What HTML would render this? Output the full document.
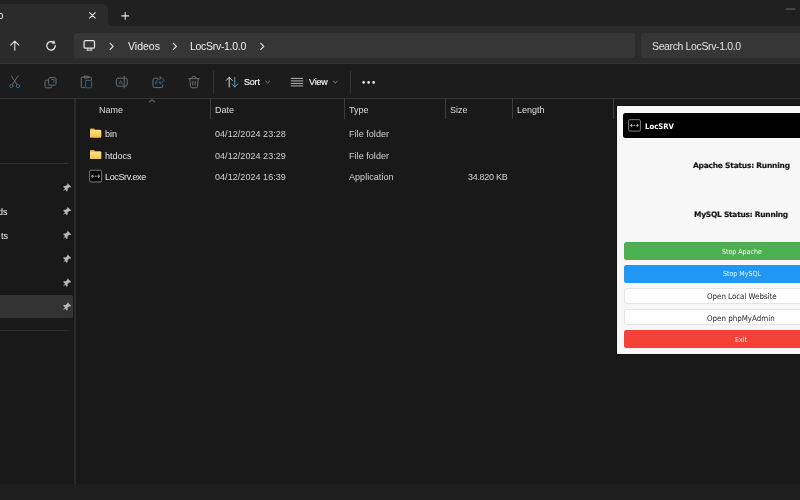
<!DOCTYPE html>
<html><head><meta charset="utf-8">
<style>
*{box-sizing:border-box;margin:0;padding:0}
html,body{width:800px;height:500px;overflow:hidden;background:#191919}
body{position:relative;font-family:"Liberation Sans",sans-serif;color:#e6e6e6;font-size:9px}
.abs{position:absolute}
svg{position:absolute;overflow:visible}
#title{left:0;top:0;width:800px;height:27px;background:#202020}
#tab{left:-10px;top:4px;width:118px;height:24px;background:#2b2b2b;border-radius:5px 5px 0 0}
#nav{left:0;top:26px;width:800px;height:38px;background:#2b2b2b}
#addr{left:74px;top:33px;width:561px;height:24.500px;background:#363636;border-radius:3px}
#search{left:641px;top:33px;width:170px;height:24.500px;background:#363636;border-radius:3px}
#navline{left:0;top:63px;width:800px;height:1px;background:#343434}
#tool{left:0;top:64px;width:800px;height:34px;background:#1c1c1c}
#toolline{left:0;top:98px;width:800px;height:1px;background:#343434}
#sideline{left:74px;top:99px;width:2px;height:385px;background:#2a2a2a}
#status{left:0;top:484px;width:800px;height:16px;background:#1f1f1f}
.t{position:absolute;white-space:nowrap;line-height:12px;will-change:transform}
.a{font-size:10.5px;color:#f0f0f0}
.h{color:#dcdcdc}
.d{color:#d2d2d2;letter-spacing:0.050px}
.colsep{position:absolute;top:99px;width:1px;height:20px;background:#3c3c3c}
.app{font-family:"DejaVu Sans Condensed","DejaVu Sans",sans-serif}
.btn{position:absolute;left:624px;width:190px;border-radius:2.5px}
</style></head><body>
<div id="title" class="abs"></div>
<div id="tab" class="abs"></div>
<div id="nav" class="abs"></div>
<div id="addr" class="abs"></div>
<div id="search" class="abs"></div>
<div id="navline" class="abs"></div>
<div id="tool" class="abs"></div>
<div id="toolline" class="abs"></div>
<div id="sideline" class="abs"></div>
<div id="status" class="abs"></div>

<!-- title bar icons -->
<svg style="left:0;top:0" width="800" height="64" viewBox="0 0 800 64" fill="none" stroke="#e4e4e4" stroke-width="1.1" stroke-linecap="round" stroke-linejoin="round">
  <path d="M89.600 12.600l5.600 5.600M95.200 12.600l-5.600 5.600"/>
  <path d="M107.800 21.600Q107.800 26 112.200 26H107.800z" fill="#2b2b2b" stroke="none"/>
  <path d="M125.200 12.500v6.800M121.800 15.900h6.800"/>
  <path d="M786.5 9h8.5" stroke="#6a6a6a"/>
  <!-- up arrow -->
  <path d="M14.800 50.300V41.200M10.700 45.200l4.100-4.100 4.100 4.100"/>
  <!-- refresh -->
  <path d="M55.260 45.200A4.300 4.300 0 1 1 53.150 42.080" stroke-width="1.300" stroke-linecap="butt"/>
  <path d="M55.050 43.180L53.950 40.690 52.350 43.470z" fill="#f4f4f4" stroke="#f4f4f4" stroke-width="0.400"/>
  <!-- monitor -->
  <rect x="84.100" y="40.600" width="10.400" height="7.600" rx="1.300" stroke-width="1.250"/>
  <path d="M86.8 50.2h5.2M87.8 48.4v1.6M91 48.4v1.6" stroke-width="0.9"/>
  <!-- chevrons -->
  <path d="M110.2 43.4l3 3-3 3M173.4 43.4l3 3-3 3M260.8 43.4l3 3-3 3" stroke-width="1.2"/>
</svg>

<div class="t" style="left:-80px;width:83.300px;text-align:right;top:10px;color:#fff">LocSrv-1.0.0</div>
<!-- address texts -->
<div class="t a" style="left:128px;top:40px">Videos</div>
<div class="t a" style="left:190px;top:40px;letter-spacing:-0.3px">LocSrv-1.0.0</div>
<div class="t a" style="left:652px;top:40px;letter-spacing:-0.37px;color:#e2e2e2">Search LocSrv-1.0.0</div>

<!-- toolbar icons -->
<svg style="left:0;top:64px" width="400" height="34" viewBox="0 64 400 34" fill="none" stroke="#6c6c6c" stroke-width="1" stroke-linecap="round" stroke-linejoin="round">
  <!-- cut -->
  <path d="M11.4 76l5.6 8.6M18 76l-5.6 8.6"/>
  <circle cx="11.4" cy="86" r="1.7" stroke="#35627f"/><circle cx="18" cy="86" r="1.7" stroke="#35627f"/>
  <!-- copy -->
  <rect x="48.6" y="77.6" width="7.4" height="7.6" rx="1.6" stroke="#6c6c6c"/>
  <path d="M51.5 79.5h2.5v3.2" stroke="#35627f"/>
  <path d="M47.6 80.2h-1.2a1.4 1.4 0 0 0-1.4 1.4v4.8a1.4 1.4 0 0 0 1.4 1.4h4a1.4 1.4 0 0 0 1.4-1.4v-0.6"/>
  <!-- paste -->
  <path d="M84.4 87.6h-2.2a1 1 0 0 1-1-1v-8.4a1 1 0 0 1 1-1h8.2a1 1 0 0 1 1 1v1.4"/>
  <rect x="83.8" y="76.2" width="5" height="1.8" rx="0.6"/>
  <rect x="85.6" y="80.4" width="6" height="7.4" rx="0.8" stroke="#35627f"/>
  <!-- rename -->
  <rect x="116.4" y="78.2" width="10.8" height="8" rx="1.6"/>
  <path d="M124.2 76.4v11.6" />
  <path d="M119 84.2l1.6-4 1.6 4M119.6 83h2" stroke="#35627f" stroke-width="0.8"/>
  <!-- share -->
  <path d="M158 78.2h-3.2a1.8 1.8 0 0 0-1.8 1.800v5.800a1.8 1.8 0 0 0 1.8 1.8h6.200a1.8 1.8 0 0 0 1.8-1.8v-1"/>
  <path d="M160.200 76.8l4.200 3.600-4.200 3.600v-2.200c-2.400 0-3.800.8-4.800 2.400 0-3 1.600-5 4.800-5.200z" stroke="#35627f"/>
  <!-- delete -->
  <path d="M188.600 78.600h10.800M191.800 78.400a2.200 2.200 0 0 1 4.400 0"/>
  <path d="M189.800 78.800l.8 7.800a1.400 1.400 0 0 0 1.400 1.200h4a1.400 1.400 0 0 0 1.400-1.200l.8-7.800"/>
  <path d="M192.800 81.400v3.800M195.200 81.400v3.800"/>
  <!-- separators -->
  <path d="M213.500 71v22M350.500 71v22" stroke="#333"/>
  <!-- sort -->
  <path d="M229.200 87V77.400M226.200 80.400l3-3 3 3" stroke="#d8d8d8"/>
  <path d="M234.800 77.400V87M231.800 84l3 3 3-3" stroke="#4aa3e0"/>
  <path d="M265.800 81.200l1.900 1.800 1.900-1.800M333.400 81.200l1.900 1.800 1.900-1.800" stroke="#8e8e8e" stroke-width="0.9"/>
  <!-- view -->
  <path d="M291.200 78.400h11.600M291.200 80.900h11.600M291.200 83.400h11.600M291.200 85.900h11.600" stroke="#c8c8c8" stroke-width="0.9"/>
  <!-- dots -->
  <g fill="#f0f0f0" stroke="none"><circle cx="363.600" cy="82.400" r="1.300"/><circle cx="368.600" cy="82.400" r="1.300"/><circle cx="373.600" cy="82.400" r="1.300"/></g>
</svg>
<div class="t" style="left:244px;top:76px;letter-spacing:-0.2px;color:#f6f6f6;-webkit-text-stroke:0.150px #f6f6f6">Sort</div>
<div class="t" style="left:309px;top:76px;letter-spacing:-0.2px;color:#f6f6f6;-webkit-text-stroke:0.150px #f6f6f6">View</div>

<!-- column headers -->
<svg style="left:148px;top:99px" width="8" height="4" viewBox="0 0 8 4" fill="none" stroke="#9a9a9a" stroke-width="0.9"><path d="M1 3.300l3-2.600 3 2.600"/></svg>
<div class="t h" style="left:99px;top:104px">Name</div>
<div class="t h" style="left:215px;top:104px">Date</div>
<div class="t h" style="left:349px;top:104px">Type</div>
<div class="t h" style="left:450px;top:104px">Size</div>
<div class="t h" style="left:517px;top:104px">Length</div>
<div class="colsep" style="left:210px"></div>
<div class="colsep" style="left:344px"></div>
<div class="colsep" style="left:445px"></div>
<div class="colsep" style="left:512px"></div>
<div class="colsep" style="left:613px"></div>

<!-- file icons -->
<svg style="left:89px;top:127px" width="14" height="58" viewBox="89 127 14 58">
  <defs><linearGradient id="fg" x1="0" y1="0" x2="0" y2="1"><stop offset="0" stop-color="#ffe08a"/><stop offset="1" stop-color="#f4c343"/></linearGradient></defs>
  <path d="M90 129.300a0.900 0.900 0 0 1 .9-.9h3l1.300 1.300h5.100a0.900 0.900 0 0 1 .9.900v6a0.900 0.900 0 0 1-.9.900h-9.400a0.900 0.900 0 0 1-.9-.9z" fill="#e8b13a"/>
  <rect x="90" y="130.100" width="11.200" height="7.400" rx="0.900" fill="url(#fg)"/>
  <path d="M90 150.900a0.900 0.900 0 0 1 .9-.9h3l1.300 1.300h5.100a0.900 0.900 0 0 1 .9.900v6a0.900 0.900 0 0 1-.9.900h-9.400a0.900 0.900 0 0 1-.9-.9z" fill="#e8b13a"/>
  <rect x="90" y="151.700" width="11.200" height="7.400" rx="0.900" fill="url(#fg)"/>
  <rect x="89.600" y="170.200" width="12" height="11.800" rx="1.400" fill="#050505" stroke="#8a8a8a" stroke-width="0.9"/>
  <path d="M92.200 176.200h7" fill="none" stroke="#e8e8e8" stroke-width="0.800" stroke-dasharray="1.800 0.800"/><path d="M93.200 174.600l-1.700 1.600 1.700 1.600M98 174.600l1.700 1.600-1.700 1.600" fill="none" stroke="#e8e8e8" stroke-width="0.800"/>
</svg>

<!-- rows -->
<div class="t" style="left:105px;top:128px">bin</div>
<div class="t" style="left:105px;top:150px">htdocs</div>
<div class="t" style="left:105px;top:171px;letter-spacing:-0.35px">LocSrv.exe</div>
<div class="t d" style="left:215px;top:128px">04/12/2024 23:28</div>
<div class="t d" style="left:215px;top:150px">04/12/2024 23:29</div>
<div class="t d" style="left:215px;top:171px">04/12/2024 16:39</div>
<div class="t d" style="left:349px;top:128px">File folder</div>
<div class="t d" style="left:349px;top:150px">File folder</div>
<div class="t d" style="left:349px;top:171px">Application</div>
<div class="t d" style="left:468px;top:171px;letter-spacing:-0.3px">34.820 KB</div>

<!-- sidebar -->
<div class="abs" style="left:0;top:295px;width:73px;height:23px;background:#333;border-radius:0 2px 2px 0"></div>
<div class="abs" style="left:0;top:163px;width:68px;height:1px;background:#333"></div>
<div class="abs" style="left:0;top:330px;width:68px;height:1px;background:#2e2e2e"></div>
<div class="t" style="left:-2px;top:205.500px;color:#f4f4f4">ds</div>
<div class="t" style="left:0.500px;top:229.500px;color:#f4f4f4">ts</div>
<svg style="left:62px;top:182px" width="10" height="130" viewBox="0 0 10 130">
  <defs><g id="pin"><path d="M5.600 0.600l3.400 3.400-1 .5-1.300-.1-1.700 1.700.1 2-.8.800-2-2L.600 8.700.8 7.400l1.500-1.600-2-2 .8-.8 2 .1 1.700-1.700L4.700 0z" fill="#b4b8bc"/></g></defs>
  <use href="#pin" transform="translate(0.900 1.200) scale(0.930)"/><use href="#pin" transform="translate(0.900 24.900) scale(0.930)"/><use href="#pin" transform="translate(0.900 48.700) scale(0.930)"/><use href="#pin" transform="translate(0.900 72.500) scale(0.930)"/><use href="#pin" transform="translate(0.900 96.400) scale(0.930)"/><use href="#pin" transform="translate(0.900 120.200) scale(0.930)"/>
</svg>

<!-- app window -->
<div class="abs" style="left:616px;top:105px;width:190px;height:250px;background:#111"></div>
<div class="abs" style="left:617px;top:106px;width:190px;height:248px;background:#f7f7f7"></div>
<div class="abs" style="left:623px;top:113px;width:190px;height:24.500px;background:#000;border-radius:2.500px"></div>
<svg style="left:628px;top:119px" width="13" height="13" viewBox="0 0 13 13" fill="none" stroke="#a0a0a0" stroke-width="0.8">
  <rect x="0.600" y="0.700" width="11.800" height="11.400" rx="1.200"/>
  <path d="M3 6.400h7" stroke="#fff" stroke-width="0.700" stroke-dasharray="1.800 0.800"/><path d="M4.200 4.900L2.600 6.400l1.600 1.500M8.800 4.900l1.600 1.500-1.600 1.500" stroke="#fff" stroke-width="0.700"/>
</svg>
<div class="t app" style="left:644.500px;top:121px;font-weight:bold;font-size:7.700px;color:#fff">LocSRV</div>
<div class="t app" style="left:692.600px;top:159.500px;font-family:'DejaVu Sans',sans-serif;font-weight:bold;font-size:7.500px;letter-spacing:-0.230px;color:#161616;-webkit-text-stroke:0.200px #161616">Apache Status: Running</div>
<div class="t app" style="left:694.400px;top:209px;font-family:'DejaVu Sans',sans-serif;font-weight:bold;font-size:7.500px;letter-spacing:-0.270px;color:#161616;-webkit-text-stroke:0.200px #161616">MySQL Status: Running</div>
<div class="btn" style="top:242px;height:18px;background:#4caf50"></div>
<div class="btn" style="top:264.800px;height:18px;background:#2196f3"></div>
<div class="btn" style="top:287.800px;height:16.200px;background:#fff;border:1px solid #e4e4e4"></div>
<div class="btn" style="top:309.300px;height:15.600px;background:#fff;border:1px solid #e4e4e4"></div>
<div class="btn" style="top:330.300px;height:17.500px;background:#f44336"></div>
<div class="t app" style="left:721.500px;top:245.600px;font-size:7px;color:#f4fff4">Stop Apache</div>
<div class="t app" style="left:722.500px;top:268.400px;font-size:7px;color:#f0f8ff">Stop MySQL</div>
<div class="t app" style="left:706.500px;top:290.900px;font-size:7.850px;color:#2a2a2a">Open Local Website</div>
<div class="t app" style="left:707px;top:313px;font-size:7.900px;color:#2a2a2a">Open phpMyAdmin</div>
<div class="t app" style="left:735px;top:334px;font-size:7px;color:#fff4f4">Exit</div>
</body></html>
